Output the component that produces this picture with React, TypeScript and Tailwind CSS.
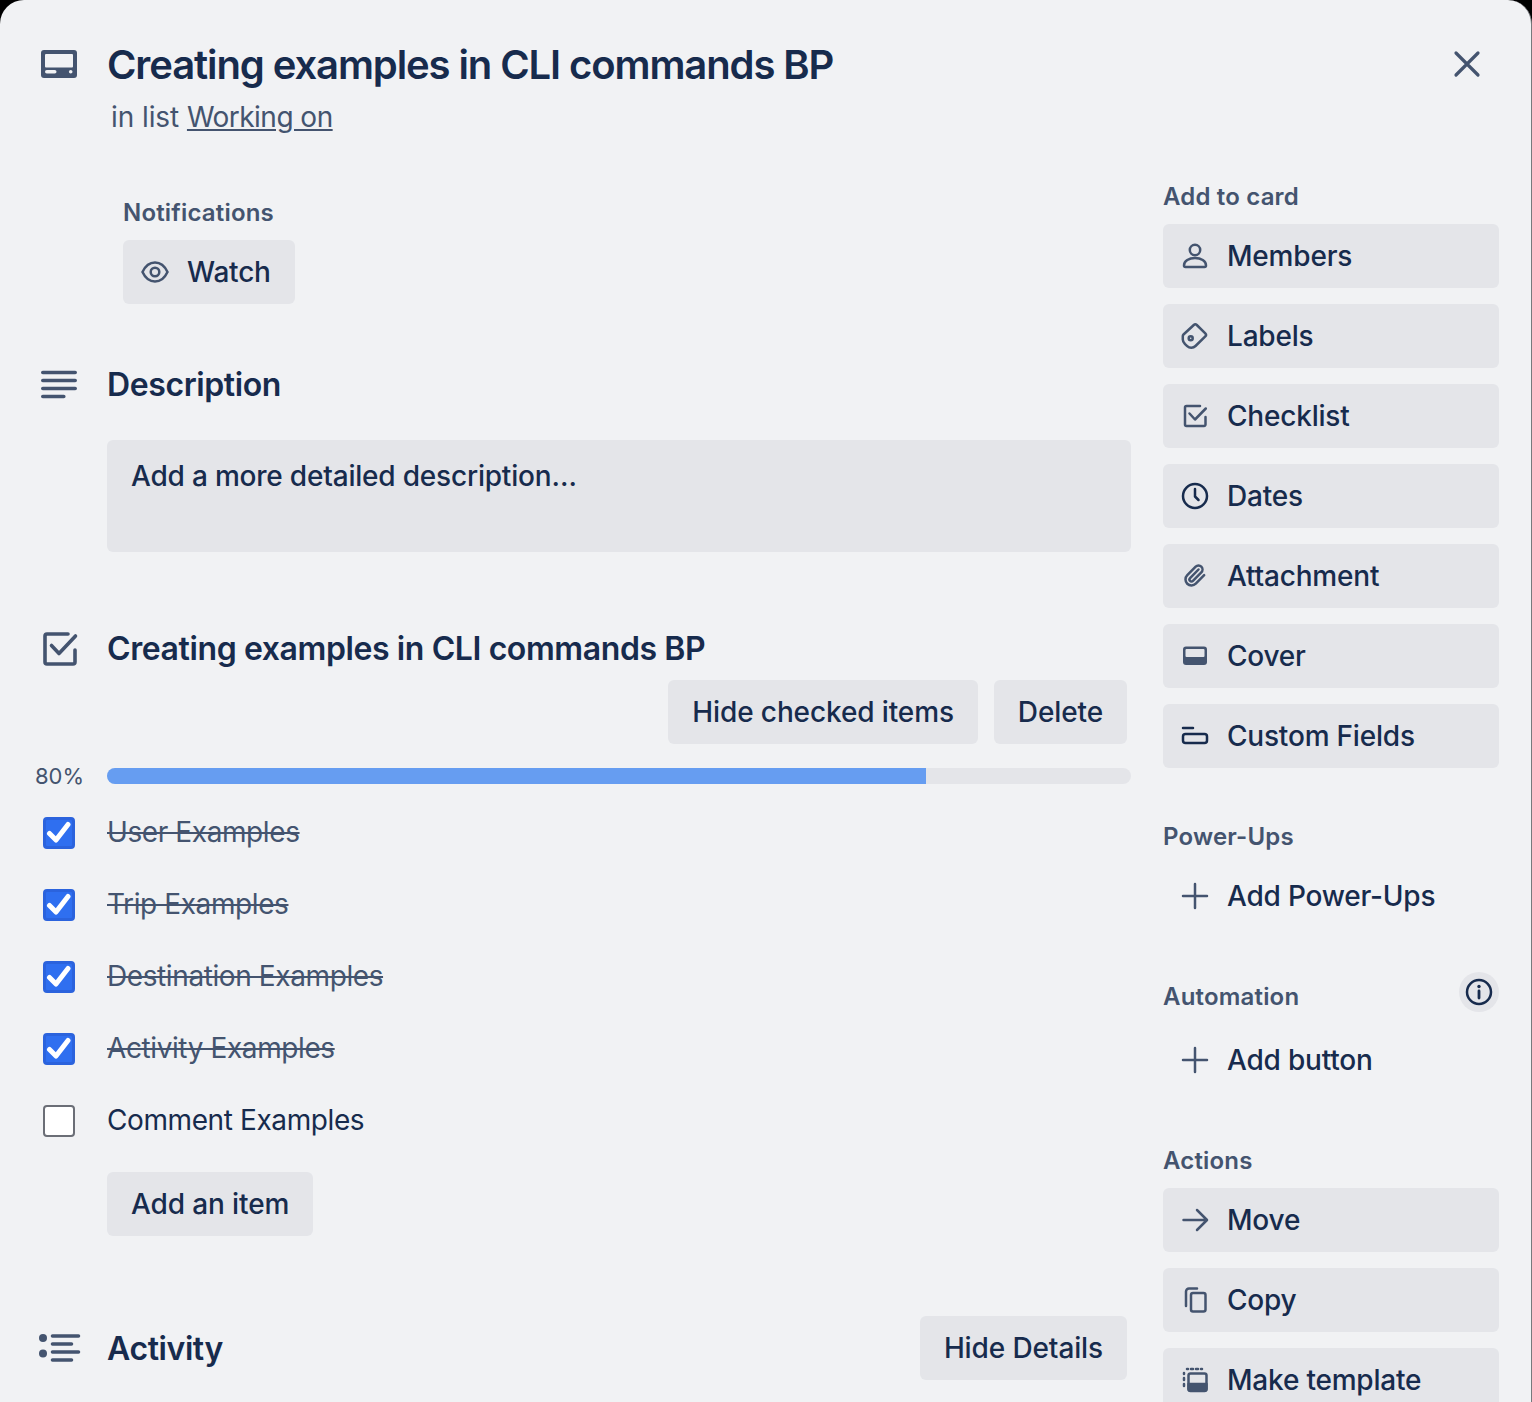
import React from "react";

const slate = "#44546f";
const navy = "#172b4d";

function Icon({ children, dark }: { children: React.ReactNode; dark?: boolean }) {
  return (
    <svg width="32" height="32" viewBox="0 0 32 32" fill="none" stroke={dark ? navy : slate} strokeWidth="2.500" strokeLinecap="round" strokeLinejoin="round" className="shrink-0">
      {children}
    </svg>
  );
}

const icons: Record<string, React.ReactNode> = {
  members: (
    <Icon>
      <circle cx="16" cy="10" r="5.200" />
      <path d="M5 25.500c0-4.500 5-7.500 11-7.500s11 3 11 7.500c0 1-.7 1.500-1.500 1.500H6.500C5.700 27 5 26.500 5 25.500z" />
    </Icon>
  ),
  labels: (
    <Icon>
      <path d="M4.500 14.500 14.800 5a2.200 2.200 0 0 1 3 0l8.500 8.300a2.200 2.200 0 0 1 0 3.100L16.500 26a6 6 0 0 1-8.300.100L5.800 23.800a6 6 0 0 1-2-4.300v-3.400c0-.6.300-1.200.7-1.600z" />
      <circle cx="11.700" cy="18.300" r="2" />
    </Icon>
  ),
  checklist: (
    <Icon>
      <path d="M26.500 17v7.500a1.500 1.500 0 0 1-1.500 1.500H7.500A1.500 1.500 0 0 1 6 24.500V7.500A1.500 1.500 0 0 1 7.500 6H21" />
      <path d="M10.500 13.500 16 19.500 26.800 8.500" />
    </Icon>
  ),
  dates: (
    <Icon dark>
      <circle cx="16" cy="16" r="12" />
      <path d="M16 9v7.500l3.500 3.500" />
    </Icon>
  ),
  attachment: (
    <Icon>
      <g transform="translate(3.500 3.500)">
        <path d="m16 6-8.414 8.586a2 2 0 0 0 2.829 2.829l8.414-8.586a4 4 0 1 0-5.657-5.657l-8.379 8.551a6 6 0 1 0 8.485 8.485l8.379-8.551" />
      </g>
    </Icon>
  ),
  cover: (
    <Icon>
      <rect x="4" y="6.500" width="24" height="18.500" rx="3" fill={slate} stroke="none" />
      <rect x="6.500" y="9" width="19" height="8" rx="1" fill="#e4e5e9" stroke="none" />
    </Icon>
  ),
  fields: (
    <Icon dark>
      <path d="M4 8h10" />
      <rect x="4" y="14" width="24" height="9" rx="2.500" />
    </Icon>
  ),
  plus: (
    <Icon>
      <path d="M16 4v24M4 16h24" />
    </Icon>
  ),
  move: (
    <Icon>
      <path d="M4.500 16h23M18 6l10 10-10 10" />
    </Icon>
  ),
  copy: (
    <Icon>
      <rect x="12" y="9" width="14.500" height="18.500" rx="2" />
      <path d="M7 22V7.500a3 3 0 0 1 3-3h8" />
    </Icon>
  ),
  template: (
    <Icon>
      <path d="M5 9v1M5 14v2M5 20v2M8 5h1M12 5h2M17 5h2M22 5h1" />
      <rect x="9.500" y="9.500" width="18" height="17" rx="2" />
      <path d="M9.500 20h18v5a2 2 0 0 1-2 2h-14a2 2 0 0 1-2-2z" fill={slate} />
    </Icon>
  ),
};

function SideButton({ icon, label, plain }: { icon: string; label: string; plain?: boolean }) {
  return (
    <div className={`flex h-[64px] items-center gap-[16px] rounded-[6px] pl-[16px] ${plain ? "" : "bg-[#e4e5e9]"}`}>
      {icons[icon]}
      <span className="text-[28px] font-medium tracking-[-0.2px] text-[#172b4d]">{label}</span>
    </div>
  );
}

function SideLabel({ children }: { children: React.ReactNode }) {
  return <div className="h-[32px] text-[24px] leading-[32px] font-semibold tracking-[0.18px] text-[#44546f]">{children}</div>;
}

function Btn({ children, className = "" }: { children: React.ReactNode; className?: string }) {
  return <div className={`flex h-[64px] items-center rounded-[6px] bg-[#e4e5e9] px-[24px] text-[28px] font-medium tracking-[-0.12px] text-[#172b4d] ${className}`}>{children}</div>;
}

function CheckRow({ label, done }: { label: string; done?: boolean }) {
  return (
    <div className="flex h-[72px] items-center">
      <div className="flex w-[107px] shrink-0 justify-end pr-[32px]">
        {done ? (
          <div className="flex h-[32px] w-[32px] items-center justify-center rounded-[4px] border-[3px] border-[#2b63dd] bg-[#2f6ff0]">
            <svg width="26" height="26" viewBox="0 0 26 26" fill="none" stroke="#fff" strokeWidth="5" strokeLinecap="round" strokeLinejoin="round">
              <path d="M3.500 13.500 10 20 22 4.500" />
            </svg>
          </div>
        ) : (
          <div className="h-[32px] w-[32px] rounded-[4px] border-2 border-[#6b6e76] bg-white" />
        )}
      </div>
      <span className={`mb-[2px] text-[28px] tracking-[-0.4px] ${done ? "text-[#44546f] line-through" : "text-[#172b4d]"}`}>{label}</span>
    </div>
  );
}

function Heading({ icon, children }: { icon: React.ReactNode; children: React.ReactNode }) {
  return (
    <div className="flex h-[40px] items-center">
      <div className="flex w-[107px] shrink-0 pl-[39px]">{icon}</div>
      <h3 className="text-[32px] leading-[40px] font-semibold tracking-[-0.4px] text-[#172b4d]">{children}</h3>
    </div>
  );
}

export default function App() {
  return (
    <div className="h-[1402px] w-[1532px] overflow-hidden bg-black font-['Inter',sans-serif]">
      <div className="h-[1402px] rounded-t-[24px] border-r border-[#77797d] bg-[#f1f2f4]">
        <div className="flex pt-[41px]">
          <div className="w-[107px] shrink-0 pl-[39px] pt-[3px]">
            <svg width="40" height="40" viewBox="0 0 40 40" className="block">
              <rect x="2" y="6" width="36" height="28" rx="3" fill={slate} />
              <rect x="6" y="10" width="28" height="13.500" rx="1" fill="#f1f2f4" />
              <rect x="6" y="26" width="11.500" height="3.500" rx="1.750" fill="#f1f2f4" />
              <circle cx="31.700" cy="27.700" r="1.800" fill="#f1f2f4" />
            </svg>
          </div>
          <div className="flex-1">
            <h1 className="text-[40px] leading-[48px] font-semibold tracking-[-1.1px] text-[#172b4d]">Creating examples in CLI commands BP</h1>
            <p className="mt-[4px] pl-[4px] text-[28px] leading-[48px] tracking-[-0.08px] text-[#44546f]">
              in list <span className="tracking-[-0.53px] underline">Working on</span>
            </p>
          </div>
          <div className="pr-[48px] pt-[7px]">
            <svg width="32" height="32" viewBox="0 0 32 32" fill="none" stroke={slate} strokeWidth="3.200" strokeLinecap="round" className="block">
              <path d="M5 5l22 22M27 5L5 27" />
            </svg>
          </div>
        </div>

        <div className="flex">
          <div className="w-[1131px] shrink-0">
            <div className="pl-[123px] pt-[56px]">
              <div className="h-[32px] text-[24px] leading-[32px] font-semibold tracking-[0.18px] text-[#44546f]">Notifications</div>
              <div className="mt-[11px] inline-flex h-[64px] w-[172px] items-center gap-[16px] rounded-[6px] bg-[#e4e5e9] pl-[16px]">
                <svg width="32" height="32" viewBox="0 0 32 32" fill="none" stroke={slate} strokeWidth="2.500" className="shrink-0">
                  <path d="M3.500 16C6.500 9.500 11 6.500 16 6.500S25.500 9.500 28.500 16C25.500 22.500 21 25.500 16 25.500S6.500 22.500 3.500 16z" />
                  <circle cx="16" cy="16" r="4.300" />
                </svg>
                <span className="text-[28px] font-medium tracking-[-0.2px] text-[#172b4d]">Watch</span>
              </div>
            </div>

            <div className="mt-[61px]">
              <Heading
                icon={
                  <svg width="40" height="40" viewBox="0 0 40 40" fill="none" stroke={slate} strokeWidth="3.600" strokeLinecap="round" className="block">
                    <path d="M3.800 7.500h32.400M3.800 15.500h32.400M3.800 23.500h32.400M3.800 31.500h21" />
                  </svg>
                }
              >
                Description
              </Heading>
            </div>
            <div className="ml-[107px] mt-[35px] h-[112px] rounded-[6px] bg-[#e4e5e9] px-[24px] pt-[18px] text-[28px] leading-[36px] font-medium tracking-[-0.2px] text-[#172b4d]">
              Add a more detailed description…
            </div>

            <div className="mt-[77px]">
              <Heading
                icon={
                  <svg width="40" height="40" viewBox="0 0 40 40" fill="none" stroke={slate} strokeWidth="3.600" strokeLinecap="round" strokeLinejoin="round" className="block">
                    <path d="M36 21v12a2 2 0 0 1-2 2H8a2 2 0 0 1-2-2V7a2 2 0 0 1 2-2h21" />
                    <path d="M12.500 16.500 20 24.500 36.500 7" />
                  </svg>
                }
              >
                Creating examples in CLI commands BP
              </Heading>
            </div>
            <div className="mt-[11px] flex justify-end gap-[16px] pr-[4px]">
              <Btn>Hide checked items</Btn>
              <Btn>Delete</Btn>
            </div>
            <div className="mt-[24px] flex h-[16px] items-center">
              <div className="w-[107px] shrink-0 pl-[35px] text-[22px] leading-[16px] text-[#44546f]">80%</div>
              <div className="h-[16px] flex-1 overflow-hidden rounded-[8px] bg-[#e4e5e9]">
                <div className="h-full w-[80%] bg-[#669df1]" />
              </div>
            </div>
            <div className="mt-[13px]">
              <CheckRow label="User Examples" done />
              <CheckRow label="Trip Examples" done />
              <CheckRow label="Destination Examples" done />
              <CheckRow label="Activity Examples" done />
              <CheckRow label="Comment Examples" />
            </div>
            <div className="ml-[107px] mt-[15px] inline-block">
              <Btn>Add an item</Btn>
            </div>
            <div className="mt-[80px] flex items-center justify-between pr-[4px]">
              <div className="pt-[2px]">
                <Heading
                  icon={
                    <svg width="42" height="40" viewBox="0 0 42 40" fill="none" stroke={slate} strokeWidth="3.600" strokeLinecap="round" className="block">
                      <circle cx="4" cy="9" r="4" fill={slate} stroke="none" />
                      <circle cx="4" cy="24.500" r="4" fill={slate} stroke="none" />
                      <path d="M13.500 7h26M13.500 15h19M13.500 23h26M13.500 31h19" />
                    </svg>
                  }
                >
                  Activity
                </Heading>
              </div>
              <Btn>Hide Details</Btn>
            </div>
          </div>

          <div className="ml-[32px] w-[336px] shrink-0 pt-[40px]">
            <SideLabel>Add to card</SideLabel>
            <div className="mt-[11px] flex flex-col gap-[16px]">
              <SideButton icon="members" label="Members" />
              <SideButton icon="labels" label="Labels" />
              <SideButton icon="checklist" label="Checklist" />
              <SideButton icon="dates" label="Dates" />
              <SideButton icon="attachment" label="Attachment" />
              <SideButton icon="cover" label="Cover" />
              <SideButton icon="fields" label="Custom Fields" />
            </div>
            <div className="mt-[53px]">
              <SideLabel>Power-Ups</SideLabel>
            </div>
            <div className="mt-[11px]">
              <SideButton icon="plus" label="Add Power-Ups" plain />
            </div>
            <div className="mt-[44px] flex items-start justify-between">
              <div className="pt-[9px]">
                <SideLabel>Automation</SideLabel>
              </div>
              <div className="flex h-[40px] w-[40px] items-center justify-center rounded-full bg-[#e4e5e9]">
                <svg width="32" height="32" viewBox="0 0 32 32" fill="none" stroke={navy} strokeWidth="2.500" strokeLinecap="round" className="block">
                  <circle cx="16" cy="16" r="12" />
                  <path d="M16 15v7" strokeWidth="2.800" />
                  <circle cx="16" cy="10.500" r="1.700" fill={navy} stroke="none" />
                </svg>
              </div>
            </div>
            <div className="mt-[15px]">
              <SideButton icon="plus" label="Add button" plain />
            </div>
            <div className="mt-[53px]">
              <SideLabel>Actions</SideLabel>
            </div>
            <div className="mt-[11px] flex flex-col gap-[16px]">
              <SideButton icon="move" label="Move" />
              <SideButton icon="copy" label="Copy" />
              <SideButton icon="template" label="Make template" />
            </div>
          </div>
        </div>
      </div>
    </div>
  );
}
